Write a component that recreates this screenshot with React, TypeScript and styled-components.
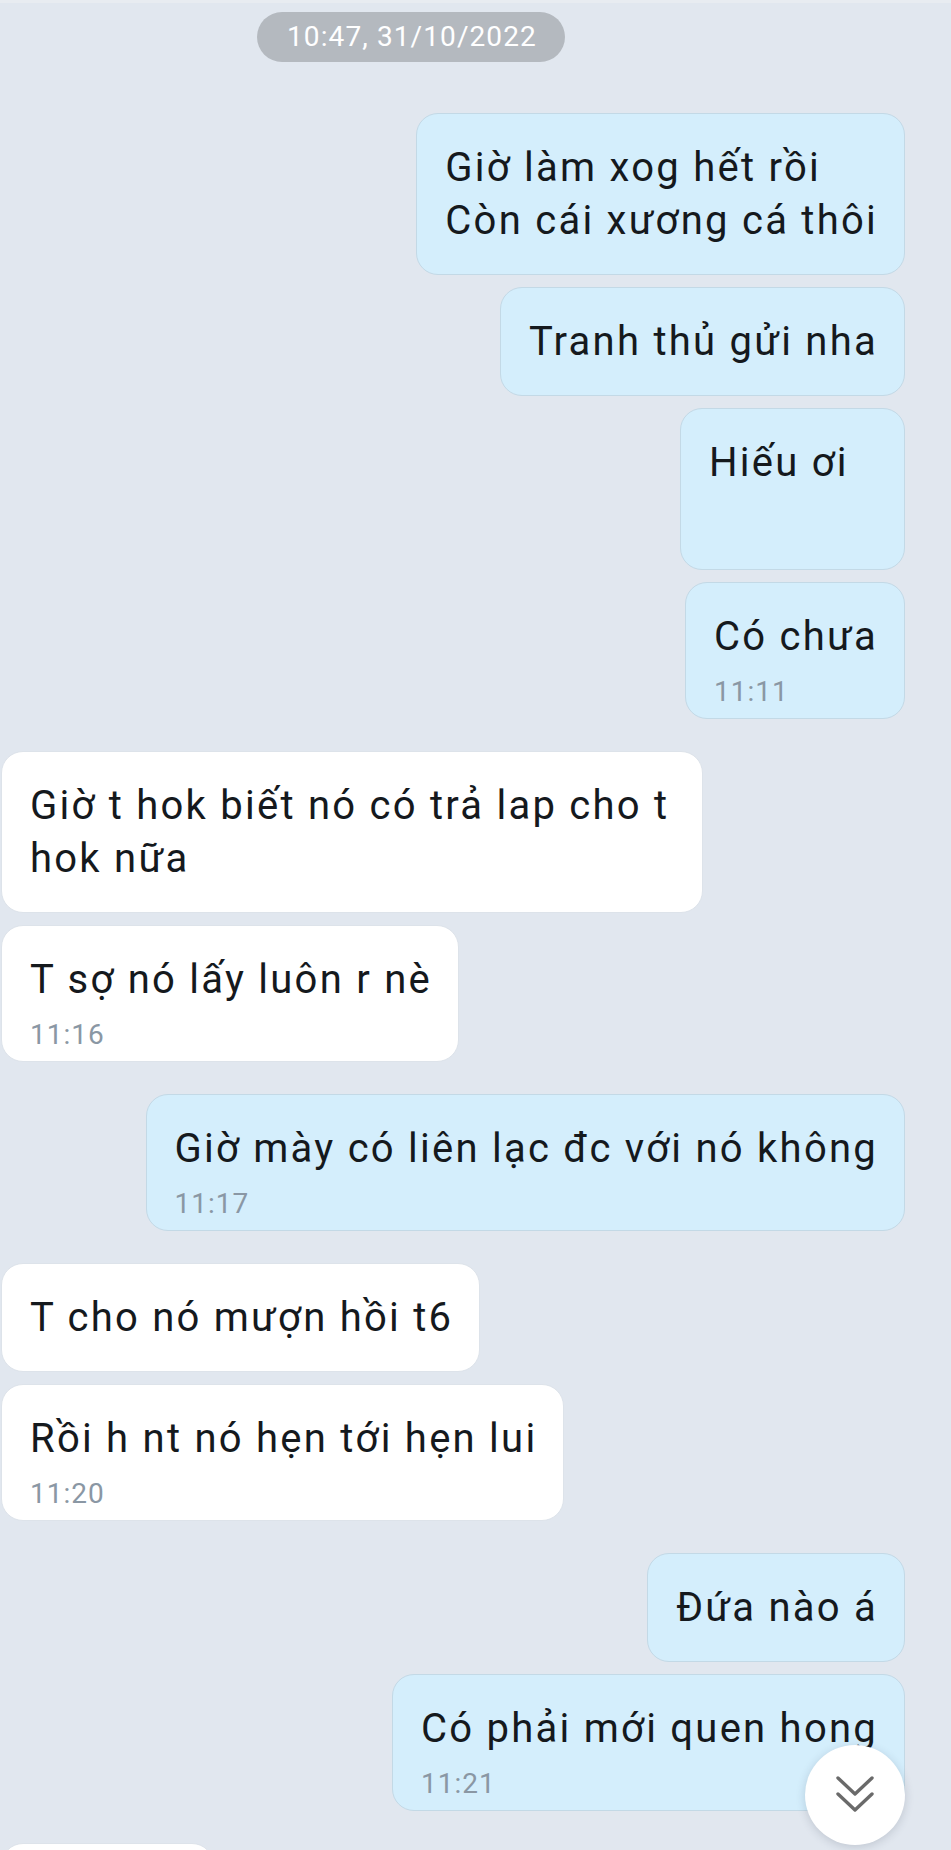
import React from "react";
import styled, { createGlobalStyle } from "styled-components";

const Global = createGlobalStyle`
  html, body { margin: 0; padding: 0; background: #e1e7ef; }
  body { font-family: Roboto, "Noto Sans", "Liberation Sans", sans-serif; }
`;

const Page = styled.div`
  position: relative;
  width: 951px;
  height: 1850px;
  overflow: hidden;
  background: #e1e7ef;
  border-top: 3px solid #e8ecf1;
  box-sizing: border-box;
`;

const Thread = styled.div`
  display: flex;
  flex-direction: column;
  gap: 32px;
  padding: 9px 46px 0 1px;
`;

const DatePill = styled.div`
  align-self: flex-start;
  margin-left: 256px;
  margin-bottom: 19px;
  height: 50px;
  padding: 0 28px 0 30px;
  border-radius: 25px;
  background: #b4b9bf;
  color: #ffffff;
  font-size: 28px;
  letter-spacing: 1.1px;
  line-height: 50px;
  white-space: nowrap;
`;

const Group = styled.div<{ $mine?: boolean }>`
  display: flex;
  flex-direction: column;
  align-items: ${(p) => (p.$mine ? "flex-end" : "flex-start")};
  gap: 12px;
`;

const Bubble = styled.div<{ $mine?: boolean; $timed?: boolean; $minWidth?: number }>`
  box-sizing: border-box;
  max-width: ${(p) => (p.$mine ? "790px" : "702px")};
  min-width: ${(p) => (p.$minWidth ? `${p.$minWidth}px` : "0")};
  padding: 27px 26px ${(p) => (p.$timed ? "8px" : "27px")} 28px;
  border-radius: 22px;
  background: ${(p) => (p.$mine ? "#d4eefc" : "#ffffff")};
  border: 1px solid ${(p) => (p.$mine ? "#c3d9e6" : "#dde3ea")};
  color: #15191d;
  font-size: 40px;
  letter-spacing: 2.25px;
  line-height: 53px;
  white-space: pre-line;
`;

const Time = styled.div`
  margin-top: 11px;
  font-size: 28px;
  letter-spacing: 1px;
  line-height: 36px;
  color: #8a97a4;
`;

const ScrollButton = styled.button`
  position: absolute;
  right: 46px;
  bottom: 5px;
  width: 100px;
  height: 100px;
  border: none;
  border-radius: 50%;
  background: #ffffff;
  box-shadow: 0 2px 10px rgba(40, 50, 70, 0.18);
  display: flex;
  align-items: center;
  justify-content: center;
  padding: 0;
`;

type Msg = { text: string; time?: string; minWidth?: number };
type G = { mine: boolean; msgs: Msg[] };

const groups: G[] = [
  {
    mine: true,
    msgs: [
      { text: "Giờ làm xog hết rồi\nCòn cái xương cá thôi" },
      { text: "Tranh thủ gửi nha" },
      { text: "Hiếu ơi\n\u00a0", minWidth: 225 },
      { text: "Có chưa", time: "11:11" },
    ],
  },
  {
    mine: false,
    msgs: [
      { text: "Giờ t hok biết nó có trả lap cho t hok nữa" },
      { text: "T sợ nó lấy luôn r nè", time: "11:16" },
    ],
  },
  {
    mine: true,
    msgs: [{ text: "Giờ mày có liên lạc đc với nó không", time: "11:17" }],
  },
  {
    mine: false,
    msgs: [
      { text: "T cho nó mượn hồi t6" },
      { text: "Rồi h nt nó hẹn tới hẹn lui", time: "11:20" },
    ],
  },
  {
    mine: true,
    msgs: [
      { text: "Đứa nào á" },
      { text: "Có phải mới quen hong", time: "11:21" },
    ],
  },
  {
    mine: false,
    msgs: [{ text: "\u00a0", minWidth: 213 }],
  },
];

export default function App() {
  return (
    <>
      <Global />
      <Page>
        <Thread>
          <DatePill>10:47, 31/10/2022</DatePill>
          {groups.map((g, i) => (
            <Group key={i} $mine={g.mine}>
              {g.msgs.map((m, j) => (
                <Bubble key={j} $mine={g.mine} $timed={!!m.time} $minWidth={m.minWidth}>
                  {m.text}
                  {m.time && <Time>{m.time}</Time>}
                </Bubble>
              ))}
            </Group>
          ))}
        </Thread>
        <ScrollButton aria-label="Cuộn xuống">
          <svg width="40" height="40" viewBox="0 0 40 40" fill="none">
            <path
              d="M3 3 L20 19 L37 3 M3 19 L20 35 L37 19"
              stroke="#6a6a6a"
              strokeWidth="3.4"
              strokeLinecap="round"
              strokeLinejoin="round"
            />
          </svg>
        </ScrollButton>
      </Page>
    </>
  );
}
